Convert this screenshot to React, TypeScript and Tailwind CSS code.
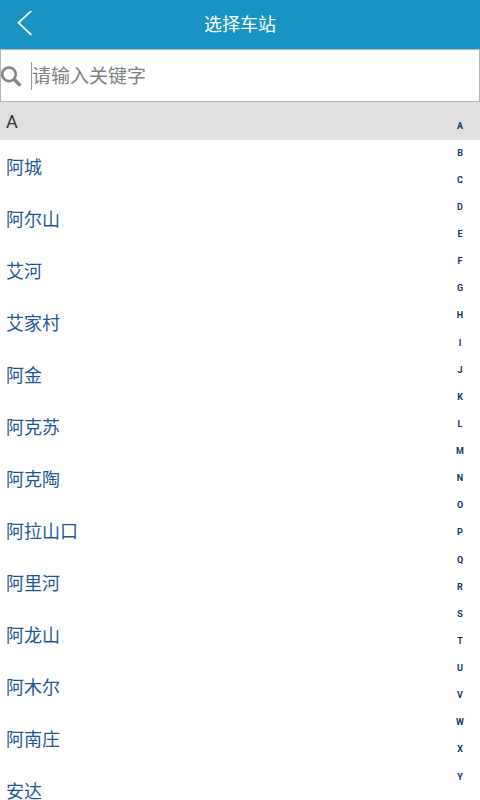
import { useRef, useState } from "react";

interface StationGroup {
  letter: string;
  stations: string[];
}

const groups: StationGroup[] = [
  {
    letter: "A",
    stations: [
      "阿城",
      "阿尔山",
      "艾河",
      "艾家村",
      "阿金",
      "阿克苏",
      "阿克陶",
      "阿拉山口",
      "阿里河",
      "阿龙山",
      "阿木尔",
      "阿南庄",
      "安达",
    ],
  },
];

const letters = "ABCDEFGHIJKLMNOPQRSTUVWXY".split("");

function Header() {
  return (
    <header className="relative flex h-[49px] shrink-0 items-center justify-center bg-[#1793c4] text-white">
      <button
        type="button"
        aria-label="返回"
        className="absolute inset-y-0 left-0 flex w-12 items-center justify-center"
      >
        <svg
          className="h-7 w-4"
          viewBox="0 0 16 28"
          fill="none"
          stroke="currentColor"
          strokeWidth="1.8"
        >
          <path d="M15.3 -0.2 L2.5 11.8 L15.3 23.8" />
        </svg>
      </button>
      <h1 className="text-lg leading-6">选择车站</h1>
    </header>
  );
}

interface SearchBarProps {
  value: string;
  onChange: (value: string) => void;
}

function SearchBar({ value, onChange }: SearchBarProps) {
  return (
    <label className="flex h-[53px] shrink-0 items-center border border-[#b4b4b4] bg-white">
      <svg
        className="h-6 w-6 shrink-0 text-[#858585]"
        viewBox="0 0 24 24"
        fill="none"
        stroke="currentColor"
      >
        <circle cx="8" cy="10.3" r="6.8" strokeWidth="2.6" />
        <path d="M12.8 15 L19.4 21.6" strokeWidth="3.4" />
      </svg>
      <input
        type="text"
        aria-label="关键字"
        placeholder="请输入关键字"
        value={value}
        onChange={(e) => onChange(e.target.value)}
        className="ml-1.5 h-7 min-w-0 flex-1 border-l border-[#999999] pt-0.5 text-[19px] leading-6 text-[#333333] outline-none placeholder:text-[#808080]"
      />
    </label>
  );
}

export default function App() {
  const [keyword, setKeyword] = useState("");
  const listRef = useRef<HTMLDivElement>(null);

  const jumpTo = (letter: string) => {
    listRef.current
      ?.querySelector(`[data-letter="${letter}"]`)
      ?.scrollIntoView();
  };

  return (
    <div className="flex h-screen flex-col bg-white font-['Roboto','Noto_Sans_CJK_SC',sans-serif]">
      <Header />
      <SearchBar value={keyword} onChange={setKeyword} />

      <main className="relative min-h-0 flex-1">
        <div
          ref={listRef}
          className="h-full overflow-y-auto [scrollbar-width:none]"
        >
          {groups.map((group) => (
            <section key={group.letter} data-letter={group.letter}>
              <h2 className="bg-[#e0e0e0] px-1.5 pt-2 pb-1.5 text-lg leading-6 text-[#333333]">
                {group.letter}
              </h2>
              <ul>
                {group.stations
                  .filter((name) => name.includes(keyword))
                  .map((name) => (
                    <li key={name}>
                      <button
                        type="button"
                        className="flex h-[52px] w-full items-center px-1.5 pt-1 text-lg leading-6 text-[#1f5796]"
                      >
                        {name}
                      </button>
                    </li>
                  ))}
              </ul>
            </section>
          ))}
        </div>

        {/* Letter index, stays put while the list scrolls */}
        <nav
          aria-label="字母索引"
          className="absolute inset-y-0 right-0 flex w-10 flex-col pt-2.5 pb-2.5"
        >
          {letters.map((letter) => (
            <button
              key={letter}
              type="button"
              onClick={() => jumpTo(letter)}
              className="flex min-h-0 flex-1 items-center justify-center text-[9px] leading-3 font-bold text-[#17375e]"
            >
              {letter}
            </button>
          ))}
        </nav>
      </main>
    </div>
  );
}
